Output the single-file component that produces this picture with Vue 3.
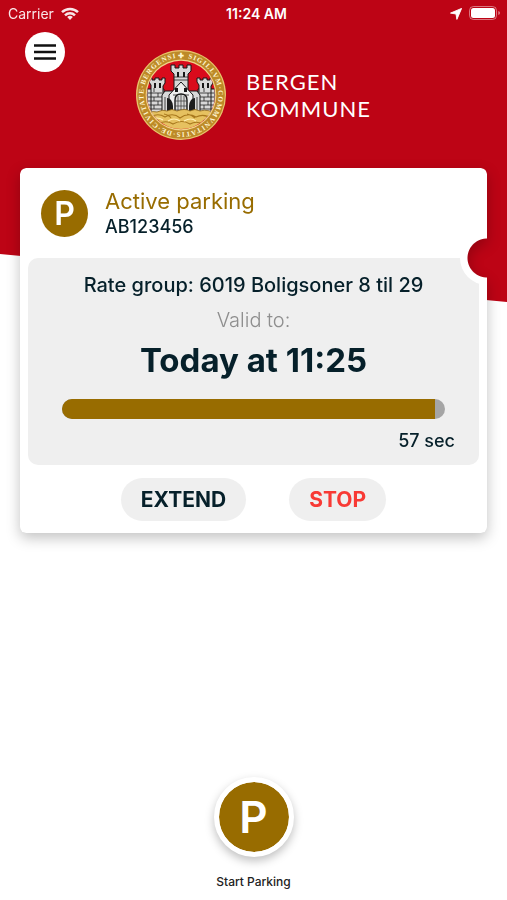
<script setup>
const card = {
  title: 'Active parking',
  plate: 'AB123456',
  rate: 'Rate group: 6019 Boligsoner 8 til 29',
  until: 'Today at 11:25',
  left: '57 sec',
  progress: 97.5
}
</script>

<template>
  <div class="page">
    <div class="backdrop"></div>

    <div class="status">
      <span class="carrier">Carrier
        <svg class="wifi" viewBox="0 0 18 13" aria-hidden="true">
          <g fill="none" stroke="#fff" stroke-width="2.5">
            <path d="M1 5.2a11.5 11.5 0 0 1 16 0" />
            <path d="M4 8.3a7.2 7.2 0 0 1 10 0" />
          </g>
          <path d="M6.2 10a4 4 0 0 1 5.6 0L9 12.9z" fill="#fff" />
        </svg>
      </span>
      <time class="clock">11:24 AM</time>
      <span class="indicators">
        <svg class="arrow" viewBox="0 0 12 12" aria-hidden="true">
          <path d="M11.6.4 6.9 11.4 6 6 .5 5.1z" fill="#fff" stroke="#fff" stroke-width=".9" stroke-linejoin="round" />
        </svg>
        <svg class="battery" viewBox="0 0 32 15" aria-hidden="true">
          <rect x=".5" y=".5" width="27" height="13" rx="4" fill="none" stroke="#fff" stroke-opacity=".45" />
          <rect x="2" y="2" width="24" height="10" rx="2.5" fill="#fff" />
          <path d="M29.3 5v4q1.7-.6 1.7-2t-1.7-2z" fill="#fff" fill-opacity=".5" />
        </svg>
      </span>
    </div>

    <header class="header">
      <button class="menu" type="button" aria-label="Menu">
        <svg viewBox="0 0 24 20" aria-hidden="true">
          <path d="M1 3.5h22M1 10h22M1 16.5h22" stroke="#111" stroke-width="2.6" />
        </svg>
      </button>
      <div class="logo">
        <svg class="seal" viewBox="0 0 90 90" aria-hidden="true">
          <defs>
            <path id="ring" d="M45 7.6a37.4 37.4 0 1 1-.01 0z" transform="rotate(-4 45 45)" />
            <clipPath id="disc"><circle cx="45" cy="45" r="34" /></clipPath>
          </defs>
          <circle cx="45" cy="45" r="45" fill="#e9c46c" />
          <circle cx="45" cy="45" r="43.8" fill="#bd8a28" />
          <circle cx="45" cy="45" r="35.4" fill="#f0d48a" />
          <circle cx="45" cy="45" r="34.2" fill="#d90b1c" />
          <text class="seal-text"><textPath href="#ring" startOffset="0">✚ SIGILLVM·COMMVNITATIS·DE·CIVITATE·BERGENSI</textPath></text>
          <g clip-path="url(#disc)">
            <g fill="#d8d8d8" stroke="#171717" stroke-width="1">
              <path d="M11 39h17v31H11zM62 39h17v31H62z" />
              <path d="M13 32v-4h3v2h3v-2h4v2h3v-2h3v5l-2 3v30H15V35l-2-3z" />
              <path d="M61 32v-4h3v2h3v-2h4v2h3v-2h3v5l-2 3v30H63V35l-2-3z" />
              <path d="M35 21v-6h4v3h4v-3h4v3h4v-3h4v6l-3 3v18H38V24z" />
              <path d="M26 45l3-4h32l3 4v22H26z" />
              <path d="M33 45l12-13 12 13v22H33z" fill="#eee" />
            </g>
            <g stroke="#222" stroke-width=".8" fill="none">
              <path d="M12 43h14M12 47h14M12 51h14M12 55h14M12 59h14M64 43h14M64 47h14M64 51h14M64 55h14M64 59h14M38 27h14M38 30h14M37 45h16" />
              <path d="M18 38v4M22 43v4M18 47v4M22 51v4M18 55v4M68 38v4M72 43v4M68 47v4M72 51v4M68 55v4M29 47v15M61 47v15" />
            </g>
            <path d="M18 33h2v5h-2zM23 33h2v5h-2zM66 33h2v5h-2zM71 33h2v5h-2zM41 22h2v5h-2zM47 22h2v5h-2zM39 38h3v4h-3zM48 38h3v4h-3z" fill="#171717" />
            <path d="M31 48q5 0 6 8v8h-6zM59 48q-5 0-6 8v8h6z" fill="#1d1d1d" />
            <path d="M39 64V50q0-6 6-6t6 6v14z" fill="#d8d8d8" stroke="#171717" stroke-width="1.4" />
            <path d="M42 46v18M45 44v20M48 46v18M39 51h12M39 56h12M39 60h12" stroke="#333" stroke-width=".7" />
            <path d="M8 67q5-7 13-5 6-3 10-1 5-3 10 0 8-3 13 0 5-3 10 0 9-3 18 5v17H8z" fill="#e6c160" stroke="#8d641a" stroke-width=".8" />
            <path d="M13 68q8-6 16-1 8-5 15 1 8-6 16-1 8-4 17 2M20 75q9-6 17-1 9-5 17 0 7-4 15 1M28 64q5 1 7 4M51 64q5 1 8 4" fill="none" stroke="#a8781d" stroke-width="1.1" />
            <path d="M15 70q6-4 12 0M32 71q6-4 12 0M48 71q7-4 12 0" fill="none" stroke="#fff0b5" stroke-width="1.2" />
          </g>
        </svg>
        <div class="wordmark">BERGEN<br />KOMMUNE</div>
      </div>
    </header>

    <main class="main">
      <div class="shadow">
        <section class="card">
          <div class="card-head">
            <span class="badge">P</span>
            <div>
              <h1 class="title">{{ card.title }}</h1>
              <p class="plate">{{ card.plate }}</p>
            </div>
          </div>
          <div class="panel">
            <p class="rate">{{ card.rate }}</p>
            <p class="valid">Valid to:</p>
            <p class="until">{{ card.until }}</p>
            <div class="track" role="progressbar" aria-label="Time used" :aria-valuenow="card.progress">
              <div class="fill" :style="{ width: card.progress + '%' }"></div>
            </div>
            <p class="left">{{ card.left }}</p>
          </div>
          <div class="actions">
            <button class="pill" type="button">EXTEND</button>
            <button class="pill stop" type="button">STOP</button>
          </div>
          <span class="notch"></span>
        </section>
      </div>
    </main>

    <footer class="footer">
      <button class="start" type="button">
        <span class="start-disc">P</span>
        <span class="start-label">Start Parking</span>
      </button>
    </footer>
  </div>
</template>

<style>
body {
  margin: 0;
  background: #fff;
}
</style>

<style scoped>
.page {
  position: relative;
  display: flex;
  flex-direction: column;
  min-height: 100vh;
  box-sizing: border-box;
  overflow: hidden;
  font-family: Inter, "Liberation Sans", sans-serif;
  color: #06202a;
}
.backdrop {
  position: absolute;
  inset: 0 0 auto;
  height: 302px;
  background: #bd0415;
  clip-path: polygon(0 0, 100% 0, 100% 100%, 0 254px);
}
.status,
.header,
.main,
.footer {
  position: relative;
}
.status {
  display: grid;
  grid-template-columns: 1fr auto 1fr;
  align-items: center;
  height: 27px;
  padding: 0 6px 0 8px;
  color: #fff;
  font-size: 14px;
}
.carrier {
  display: flex;
  align-items: center;
  gap: 7px;
  opacity: 0.9;
}
.wifi {
  width: 18px;
  height: 13px;
}
.clock {
  padding-left: 4px;
  font-weight: 600;
}
.indicators {
  display: flex;
  align-items: center;
  justify-content: flex-end;
  gap: 7px;
}
.arrow {
  width: 12px;
  height: 12px;
}
.battery {
  width: 32px;
  height: 15px;
}
.header {
  display: grid;
  grid-template-columns: 1fr auto 1fr;
  align-items: start;
  height: 141px;
  padding: 0 25px;
}
.menu {
  display: grid;
  place-items: center;
  width: 40px;
  height: 40px;
  margin-top: 5px;
  padding: 0;
  border: 0;
  border-radius: 50%;
  background: #fff;
}
.menu svg {
  width: 24px;
  height: 20px;
}
.logo {
  display: flex;
  align-items: center;
  gap: 20px;
  margin-top: 23px;
}
.seal {
  width: 90px;
  height: 90px;
}
.seal-text {
  fill: #fff6d2;
  font: bold 7px "Liberation Serif", serif;
  letter-spacing: 1px;
}
.wordmark {
  color: #fff;
  font: 400 22px/27px Lato, sans-serif;
  letter-spacing: 1px;
}
.main {
  padding: 0 20px;
}
.shadow {
  filter: drop-shadow(0 5px 7px rgba(0, 0, 0, 0.24));
}
.card {
  position: relative;
  padding: 0 8px 12px;
  border-radius: 6px;
  background: #fff;
  -webkit-mask: radial-gradient(circle at 100% 90px, transparent 19px, #000 20px);
  mask: radial-gradient(circle at 100% 90px, transparent 19px, #000 20px);
}
.notch {
  position: absolute;
  top: 63px;
  right: -27px;
  width: 54px;
  height: 54px;
  border-radius: 50%;
  background: #fff;
}
.card-head {
  display: flex;
  align-items: center;
  gap: 17px;
  height: 90px;
  padding: 0 13px;
}
.badge {
  display: grid;
  place-items: center;
  width: 47px;
  height: 47px;
  border-radius: 50%;
  background: #986c00;
  color: #fff;
  font-size: 32px;
  font-weight: 600;
}
.title,
p {
  margin: 0;
}
.title {
  color: #986c00;
  font-size: 22px;
  font-weight: 400;
  line-height: 28px;
}
.plate {
  font-size: 18px;
  font-weight: 500;
  line-height: 24px;
}
.panel {
  display: flex;
  flex-direction: column;
  padding: 12px 24px;
  border-radius: 10px;
  background: #efefef;
  text-align: center;
}
.rate {
  font-size: 20px;
  font-weight: 500;
  line-height: 30px;
}
.valid {
  color: #8e8e8e;
  font-size: 20px;
  font-weight: 300;
  line-height: 40px;
}
.until {
  font-size: 33px;
  font-weight: 700;
  line-height: 40px;
}
.track {
  height: 20px;
  margin: 19px 10px 10px;
  overflow: hidden;
  border-radius: 10px;
  background: #a5a5a5;
}
.fill {
  height: 100%;
  background: #986c00;
}
.left {
  font-size: 18px;
  font-weight: 500;
  line-height: 24px;
  text-align: right;
}
.actions {
  display: flex;
  justify-content: center;
  gap: 43px;
  margin-top: 13px;
}
.pill {
  height: 43px;
  padding: 0 20px;
  border: 0;
  border-radius: 22px;
  background: #efefef;
  color: #06202a;
  font: 700 21px/24px Inter, sans-serif;
}
.stop {
  color: #f83a35;
}
.footer {
  display: flex;
  justify-content: center;
  margin-top: auto;
  padding-bottom: 10px;
}
.start {
  display: flex;
  flex-direction: column;
  align-items: center;
  gap: 17px;
  padding: 0;
  border: 0;
  background: none;
  color: #222;
  font: 500 12px/16px Inter, sans-serif;
}
.start-disc {
  display: grid;
  place-items: center;
  width: 70px;
  height: 70px;
  border: 5px solid #fff;
  border-radius: 50%;
  background: #986c00;
  background-clip: padding-box;
  box-shadow: 0 4px 10px rgba(0, 0, 0, 0.25);
  color: #fff;
  font-size: 44px;
  font-weight: 600;
}
</style>
